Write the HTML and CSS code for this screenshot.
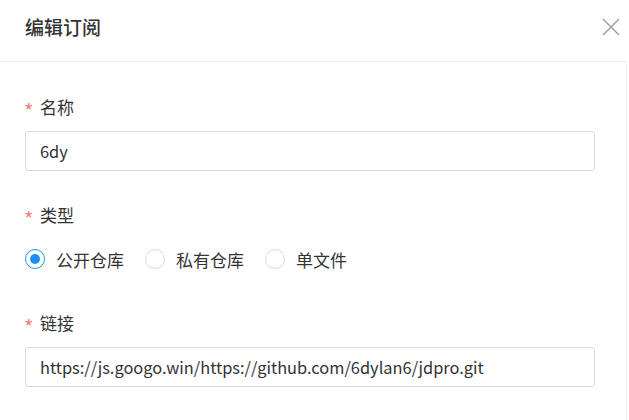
FILE: index.html
```html
<!DOCTYPE html>
<html lang="zh">
<head>
<meta charset="utf-8">
<link rel="stylesheet" href="styles.css">
</head>
<body>
<div class="dialog">
  <div class="header">
    <div class="title">编辑订阅</div>
    <svg class="close" width="18" height="18" viewBox="0 0 18 18"><path d="M1 1L17 17M17 1L1 17" stroke="#999" stroke-width="1.3" fill="none"/></svg>
  </div>
  <div class="body">
    <div class="item">
      <div class="label"><span class="req">*</span>名称</div>
      <div class="input">6dy</div>
    </div>
    <div class="item">
      <div class="label"><span class="req">*</span>类型</div>
      <div class="radios">
        <div class="radio"><span class="dot checked"></span><span>公开仓库</span></div>
        <div class="radio"><span class="dot"></span><span>私有仓库</span></div>
        <div class="radio"><span class="dot"></span><span>单文件</span></div>
      </div>
    </div>
    <div class="item">
      <div class="label"><span class="req">*</span>链接</div>
      <div class="input">https://js.googo.win/https://github.com/6dylan6/jdpro.git</div>
    </div>
  </div>
</div>
</body>
</html>
```
FILE: styles.css
```css
html, body { margin: 0; padding: 0; background: #fff; }
body {
  font-family: "Noto Sans CJK SC", "Noto Sans", sans-serif;
  color: #333;
  width: 629px;
  height: 420px;
  overflow: hidden;
}
.dialog { width: 627px; display: flex; flex-direction: column; }
.header {
  height: 61px;
  border-bottom: 1px solid #ebebeb;
  display: flex;
  align-items: center;
  justify-content: space-between;
  padding: 0 6px 0 25px;
  width: 595px;
}
.title { font-size: 19px; font-weight: 500; color: #333; line-height: 24px; margin-top: -7px; }
.close { margin-top: -7px; }
.body {
  padding: 33px 31px 0 25px;
  border-right: 1px solid #f0f0f0;
  height: 325px;
  width: 570px;
}
.item { margin-bottom: 32px; }
.label {
  font-size: 17px;
  line-height: 24px;
  height: 24px;
  margin-bottom: 12px;
  color: #333;
  display: flex;
  align-items: center;
}
.req {
  color: #f56c6c;
  font-family: "Liberation Sans", sans-serif;
  font-size: 19px;
  width: 15px;
  line-height: 24px;
  margin-top: 5px;
}
.input {
  height: 38px;
  border: 1px solid #d9d9d9;
  border-radius: 3px;
  padding: 0 14px;
  font-size: 16.4px;
  line-height: 38px;
  color: #333;
}
.radios { display: flex; align-items: center; height: 40px; margin-top: 0; }
.radio { display: flex; align-items: center; font-size: 17px; margin-right: 21px; }
.dot {
  width: 18px; height: 18px;
  border: 1px solid #d9d9d9;
  border-radius: 50%;
  margin-right: 11px;
  position: relative;
}
.dot.checked { border-color: #1890ff; }
.dot.checked::after {
  content: "";
  position: absolute;
  left: 4px; top: 4px;
  width: 10px; height: 10px;
  border-radius: 50%;
  background: #1890ff;
}
```
